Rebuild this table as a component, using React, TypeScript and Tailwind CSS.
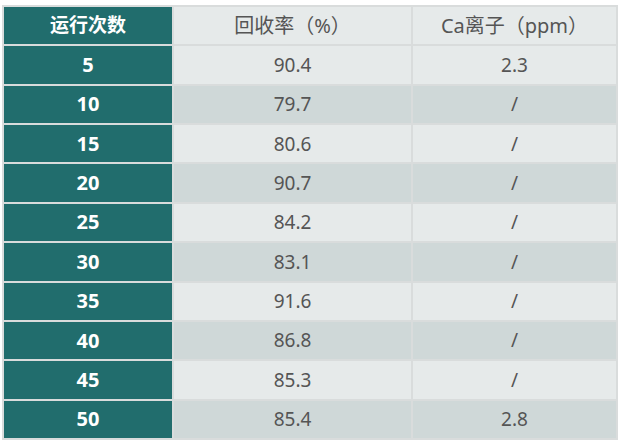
import React from "react";

const rows: [string, string, string][] = [
  ["5", "90.4", "2.3"],
  ["10", "79.7", "/"],
  ["15", "80.6", "/"],
  ["20", "90.7", "/"],
  ["25", "84.2", "/"],
  ["30", "83.1", "/"],
  ["35", "91.6", "/"],
  ["40", "86.8", "/"],
  ["45", "85.3", "/"],
  ["50", "85.4", "2.8"],
];

export default function App() {
  return (
    <div
      className="w-[624px] h-[448px] bg-white pt-[5px] pl-[2px]"
      style={{ fontFamily: '"Noto Sans", "Noto Sans CJK SC", sans-serif' }}
    >
      <div className="w-[616px] h-[435px] bg-[#d9dcdc] p-[2px] grid grid-cols-[168px_237px_203px] grid-rows-11 gap-[2px] text-[19px]">
        <div className="bg-[#216d6d] text-white font-bold text-[19px] flex items-center justify-center">运行次数</div>
        <div className="bg-[#e6eaea] text-[#555] text-[20px] flex items-center justify-center">回收率（%）</div>
        <div className="bg-[#e6eaea] text-[#555] text-[20px] flex items-center justify-center">Ca离子（ppm）</div>
        {rows.map((r, i) => {
          const bg = i % 2 === 0 ? "bg-[#e6eaea]" : "bg-[#cfd8d8]";
          return (
            <React.Fragment key={r[0]}>
              <div className="bg-[#216d6d] text-white font-bold text-[20px] flex items-center justify-center">{r[0]}</div>
              <div className={`${bg} text-[#555] flex items-center justify-center`}>{r[1]}</div>
              <div className={`${bg} text-[#555] flex items-center justify-center`}>{r[2]}</div>
            </React.Fragment>
          );
        })}
      </div>
    </div>
  );
}
